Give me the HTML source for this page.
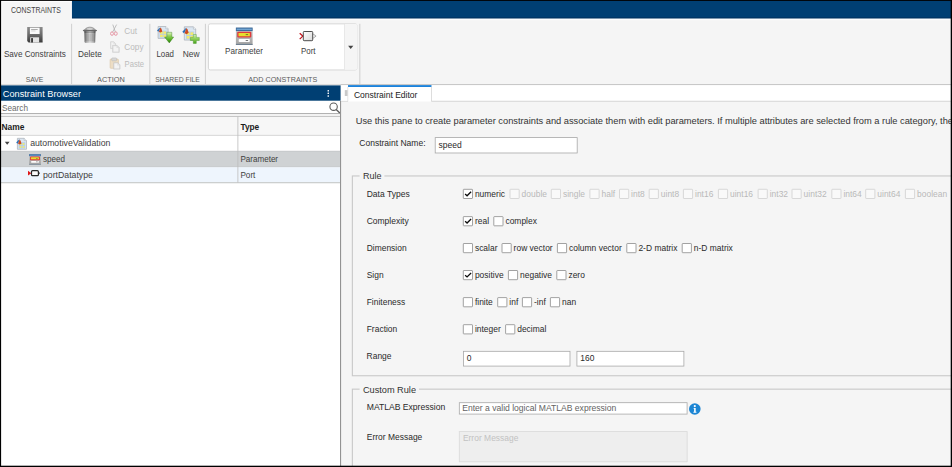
<!DOCTYPE html><html><head><meta charset="utf-8"><title>Constraint Manager</title><style>
html,body{margin:0;padding:0;width:952px;height:467px;overflow:hidden;background:#000;}
#scale{position:absolute;left:0;top:0;width:9520px;height:4670px;transform:scale(0.1);transform-origin:0 0;font-family:"Liberation Sans", Arial, sans-serif;}
#app{position:absolute;left:0px;top:0px;width:9520px;height:4670px;background:#f5f5f5;overflow:hidden;}
.frame{position:absolute;background:#000;z-index:50;}
.abs{position:absolute;}
.t{position:absolute;white-space:nowrap;transform-origin:0 0;display:block;}
.ic{position:absolute;overflow:visible;}
.sep{position:absolute;top:238px;width:9px;height:604px;background:#cbcbcb;}
.cb{position:absolute;width:100px;height:100px;box-sizing:border-box;border:8.5px solid #8c8c8c;border-radius:9px;background:#fff;}
.cb.dis{border-color:#cfcfcf;background:#f9f9f9;}
.inp{position:absolute;box-sizing:border-box;border:8px solid #a6a6a6;background:#fff;}
.fs{position:absolute;box-sizing:border-box;border:11px solid #c8c8c8;}
</style></head><body><div id="scale"><div id="app"><div id="toolstrip"><div class="tabbar" style="position:absolute;left:0px;top:0px;width:9520px;height:186px;background:#003f73;"></div><div style="position:absolute;left:0px;top:174px;width:9520px;height:12px;background:#00305f;"></div><div style="position:absolute;left:0px;top:186px;width:9520px;height:15px;background:#fdfdfd;"></div><div class="tab" style="position:absolute;left:0px;top:0px;width:717px;height:202px;background:#f5f5f5;"></div><div style="position:absolute;left:11px;top:9px;width:707px;height:12px;background:#fefefe;"></div><div style="position:absolute;left:705px;top:9px;width:13px;height:181px;background:#fdfdfd;"></div><div style="position:absolute;left:11px;top:9px;width:11px;height:833px;background:#fdfdfd;"></div><span class="t" id="t0" style="left:110px;top:52.4px;font-size:82px;line-height:98.4px;color:#444;transform:scaleX(0.8503);">CONSTRAINTS</span><div class="sep" style="left:712px;"></div><div class="sep" style="left:1494px;"></div><div class="sep" style="left:2049px;"></div><div class="sep" style="left:3594px;"></div><svg class="ic" style="left:270px;top:269px;width:158px;height:158px;" viewBox="0 0 15.8 15.8"><defs><linearGradient id="gsv" x1="0" y1="0" x2="0" y2="1"><stop offset="0" stop-color="#8c8c8c"/><stop offset="0.5" stop-color="#6a6a6a"/><stop offset="1" stop-color="#3a3a3a"/></linearGradient></defs>
<path d="M0.2 0.2H15.6V15.6H1.6L0.2 14.2Z" fill="url(#gsv)"/>
<rect x="2.9" y="0.8" width="9.7" height="6.3" fill="#fafafa"/>
<rect x="4.1" y="2.3" width="6.6" height="0.8" fill="#9a9a9a"/>
<rect x="4.1" y="3.7" width="4.4" height="0.7" fill="#c4c4c4"/>
<rect x="3.2" y="10.4" width="8.9" height="5.2" fill="#e4e4e4"/>
<rect x="4.1" y="11.2" width="1.9" height="4.4" fill="#3c3c3c"/></svg><span class="t" id="t1" style="left:39px;top:489.5px;font-size:85px;line-height:102px;color:#3e3e3e;transform:scaleX(0.9567);">Save Constraints</span><span class="t" id="t2" style="left:257px;top:748.3px;font-size:81px;line-height:97.2px;color:#5a5a5a;transform:scaleX(0.8429);">SAVE</span><svg class="ic" style="left:826px;top:268px;width:146px;height:160px;" viewBox="0 0 14.6 16"><defs><linearGradient id="gtr" x1="0" y1="0" x2="1" y2="0"><stop offset="0" stop-color="#5a5a5a"/><stop offset="0.22" stop-color="#a2a2a2"/><stop offset="0.5" stop-color="#d8d8d8"/><stop offset="0.8" stop-color="#a8a8a8"/><stop offset="1" stop-color="#5e5e5e"/></linearGradient>
<linearGradient id="gtl" x1="0" y1="0" x2="0" y2="1"><stop offset="0" stop-color="#d2d2d2"/><stop offset="1" stop-color="#8c8c8c"/></linearGradient></defs>
<path d="M0.5 3.7C2.6 2.9 3.4 0.3 7.3 0.3C11.2 0.3 12 2.9 14.1 3.7Z" fill="url(#gtl)" stroke="#6e6e6e" stroke-width="0.5"/>
<ellipse cx="7.3" cy="2.2" rx="3" ry="0.8" fill="#e6e6e6" opacity="0.85"/>
<path d="M0.1 3.95L0.9 3.4H13.7L14.5 3.95L13.5 4.5H1.1Z" fill="#585858"/>
<path d="M1.7 4.3H12.9L12.6 15.2C12.6 15.8 12.1 16 11.6 16H3C2.5 16 2 15.8 2 15.2Z" fill="url(#gtr)"/>
<rect x="1.8" y="4.3" width="11" height="1.9" fill="#000" opacity="0.22"/>
<path d="M4.4 6.8V14.6M6.3 6.8V14.6M8.3 6.8V14.6M10.2 6.8V14.6" stroke="#7c7c7c" stroke-width="0.55" opacity="0.75"/>
<rect x="2.4" y="14.7" width="9.8" height="0.9" fill="#fff" opacity="0.25"/></svg><span class="t" id="t3" style="left:780px;top:489.5px;font-size:85px;line-height:102px;color:#3e3e3e;transform:scaleX(0.9675);">Delete</span><svg class="ic" style="left:1101px;top:244px;width:76px;height:114px;" viewBox="0 0 7.6 11.4"><g opacity="0.62"><path d="M2.7 0.2L5.3 7.7M6.5 0.2L2.5 7.7" stroke="#8e8e8e" stroke-width="0.85" fill="none"/>
<ellipse cx="1.9" cy="9.2" rx="1.45" ry="1.75" fill="none" stroke="#d9506a" stroke-width="0.9"/>
<ellipse cx="5.7" cy="9.2" rx="1.45" ry="1.75" fill="none" stroke="#d9506a" stroke-width="0.9"/></g></svg><span class="t" id="t4" style="left:1243px;top:259.5px;font-size:85px;line-height:102px;color:#bcbcbc;transform:scaleX(0.9621);">Cut</span><svg class="ic" style="left:1102px;top:413px;width:92px;height:112px;" viewBox="0 0 9.4 11.4"><g opacity="0.62"><path d="M0.4 0.4H3.6L5.4 2.2V7.4H0.4Z" fill="#d9d9d9" stroke="#b2b2b2" stroke-width="0.6"/>
<path d="M1.2 1.2H3.2V2.8H4.6V6.6H1.2Z" fill="#f2f2f2"/>
<path d="M2.5 4.1H7L9.2 6.3V11.2H2.5Z" fill="#d4d4d4" stroke="#aaaaaa" stroke-width="0.6"/>
<path d="M3.4 5H6.4V6.8H8.3V10.3H3.4Z" fill="#f2f2f2"/></g></svg><span class="t" id="t5" style="left:1243px;top:419.5px;font-size:85px;line-height:102px;color:#bcbcbc;transform:scaleX(0.9697);">Copy</span><svg class="ic" style="left:1098px;top:578px;width:104px;height:115px;" viewBox="0 0 10.4 11.5"><g opacity="0.62"><rect x="0.3" y="1.3" width="8.3" height="9.2" rx="0.8" fill="#e7cfa8" stroke="#c8a672" stroke-width="0.6"/>
<rect x="1.9" y="0.1" width="4.9" height="2.9" rx="0.8" fill="#c4c4c4" stroke="#8e8e8e" stroke-width="0.5"/>
<path d="M3.8 4.9H8L10.2 7.1V11.3H3.8Z" fill="#d6d6d6" stroke="#a8a8a8" stroke-width="0.6"/>
<path d="M4.7 5.8H7.4V7.6H9.3V10.4H4.7Z" fill="#f2f2f2"/></g></svg><span class="t" id="t6" style="left:1246px;top:589.5px;font-size:85px;line-height:102px;color:#bcbcbc;transform:scaleX(0.8940);">Paste</span><span class="t" id="t7" style="left:970px;top:748.3px;font-size:81px;line-height:97.2px;color:#5a5a5a;transform:scaleX(0.9052);">ACTION</span><svg class="ic" style="left:1570px;top:262px;width:167px;height:167px;" viewBox="0 0 16.7 16.7"><defs><linearGradient id="gld" x1="0" y1="0" x2="0" y2="1"><stop offset="0" stop-color="#dff3c4"/><stop offset="0.35" stop-color="#8fd058"/><stop offset="0.7" stop-color="#56ad24"/><stop offset="1" stop-color="#2a7c10"/></linearGradient></defs><g transform="translate(0.8 0)">
<path d="M0.3 0.3H8.00L10.30 2.6V12.20H0.3Z" fill="#dbe6f1" stroke="#a3a9b0" stroke-width="0.65"/>
<path d="M8.00 0.3V2.6H10.30" fill="#f6f9fc" stroke="#a3a9b0" stroke-width="0.5"/>
<rect x="1.70" y="4.50" width="7.21" height="7.00" fill="#b9cfe8"/>
<rect x="2.33" y="5.25" width="2.54" height="2.38" fill="#f3ec6c"/><rect x="2.33" y="8.50" width="2.54" height="2.38" fill="#f3ec6c"/><rect x="5.72" y="5.25" width="2.54" height="2.38" fill="#f3ec6c"/><rect x="5.72" y="8.50" width="2.54" height="2.38" fill="#f3ec6c"/></g><g transform="translate(0 1.1) scale(1.0)">
<path d="M0 3.3L2.6 0.6L3.4 0.2L2.4 3.0L1.3 4.5Z" fill="#2a70b8"/>
<path d="M3.4 0.2L4.4 1.5L5.3 4.2L3.6 5.3L1.9 4.6L2.5 2.8Z" fill="#cc4a20"/>
</g><path d="M9.8 6.1H14.8V10.8H16.7L12.3 16.7L7.5 10.8H9.8Z" fill="url(#gld)" stroke="#2f7a16" stroke-width="0.4"/></svg><span class="t" id="t8" style="left:1564px;top:489.5px;font-size:85px;line-height:102px;color:#3e3e3e;transform:scaleX(0.9312);">Load</span><svg class="ic" style="left:1823px;top:265px;width:170px;height:170px;" viewBox="0 0 17 17"><defs><linearGradient id="gnw" x1="0" y1="0" x2="0" y2="1"><stop offset="0" stop-color="#d6efb6"/><stop offset="0.45" stop-color="#92d25c"/><stop offset="1" stop-color="#4aa51e"/></linearGradient></defs><g transform="translate(1.7 0)">
<path d="M0.3 0.3H9.40L11.70 2.6V13.60H0.3Z" fill="#dbe6f1" stroke="#a3a9b0" stroke-width="0.65"/>
<path d="M9.40 0.3V2.6H11.70" fill="#f6f9fc" stroke="#a3a9b0" stroke-width="0.5"/>
<rect x="1.92" y="5.00" width="8.16" height="7.78" fill="#b9cfe8"/>
<rect x="2.64" y="5.84" width="2.88" height="2.64" fill="#f3ec6c"/><rect x="2.64" y="9.45" width="2.88" height="2.64" fill="#f3ec6c"/><rect x="6.48" y="5.84" width="2.88" height="2.64" fill="#f3ec6c"/><rect x="6.48" y="9.45" width="2.88" height="2.64" fill="#f3ec6c"/></g><g transform="translate(0 1.3) scale(1.2)">
<path d="M0 3.3L2.6 0.6L3.4 0.2L2.4 3.0L1.3 4.5Z" fill="#2a70b8"/>
<path d="M3.4 0.2L4.4 1.5L5.3 4.2L3.6 5.3L1.9 4.6L2.5 2.8Z" fill="#cc4a20"/>
</g><path d="M11 8H14V10.9H17V14H14V16.9H11V14H8.1V10.9H11Z" fill="url(#gnw)" stroke="#3f8f20" stroke-width="0.4"/></svg><span class="t" id="t9" style="left:1828px;top:489.5px;font-size:85px;line-height:102px;color:#3e3e3e;transform:scaleX(0.9824);">New</span><span class="t" id="t10" style="left:1553px;top:748.3px;font-size:81px;line-height:97.2px;color:#5a5a5a;transform:scaleX(0.8399);">SHARED FILE</span><div style="position:absolute;left:2080px;top:234px;width:1494px;height:470px;background:#fff;box-sizing:border-box;border:9px solid #d2d2d2;border-radius:22px;"></div><div style="position:absolute;left:3442px;top:241px;width:125px;height:456px;background:#f5f5f5;border-left:7px solid #d6d6d6;border-radius:0 16px 16px 0;"></div><svg class="ic" style="left:3481px;top:458px;width:52px;height:32px;" viewBox="0 0 10 6"><path d="M0 0H10L5 6Z" fill="#444"/></svg><svg class="ic" style="left:2359px;top:276px;width:167px;height:172px;" viewBox="0 0 16.7 17.2" preserveAspectRatio="none"><defs><linearGradient id="gpbp" x1="0" y1="0" x2="0" y2="1"><stop offset="0" stop-color="#c9c9c9"/><stop offset="1" stop-color="#a4a4a4"/></linearGradient></defs>
<rect x="0" y="0" width="16.7" height="17.2" fill="url(#gpbp)"/>
<rect x="0" y="0" width="16.7" height="3.4" fill="#3d6c9e"/>
<rect x="0.8" y="1.1" width="15.1" height="1.1" fill="#7fb2dd"/>
<rect x="0" y="16.3" width="16.7" height="0.9" fill="#5d7388"/>
<rect x="1.3" y="4.1" width="14.1" height="5.9" rx="1" fill="#e03a3a"/>
<rect x="2.6" y="5.4" width="11.4" height="3.3" rx="0.6" fill="#e6dd2e"/>
<rect x="9.8" y="6.6" width="2.4" height="0.9" fill="#6d6a2a"/>
<rect x="2.8" y="11.3" width="11.1" height="3.1" rx="0.8" fill="#fdfdfd"/>
<rect x="9.8" y="12.4" width="2.4" height="0.9" fill="#6a6a6a"/></svg><span class="t" id="t11" style="left:2250px;top:455.5px;font-size:85px;line-height:102px;color:#3e3e3e;transform:scaleX(0.9572);">Parameter</span><svg class="ic" style="left:2991px;top:310px;width:173px;height:102px;" viewBox="0 0 17.3 10.2"><defs><linearGradient id="gpt" x1="0" y1="0" x2="1" y2="1"><stop offset="0" stop-color="#ffffff"/><stop offset="1" stop-color="#d9d9d9"/></linearGradient></defs>
<path d="M0.6 2.2L3.7 5.1L0.6 8.1" fill="none" stroke="#c0141c" stroke-width="1.3"/>
<path d="M13.9 2.9L17 5.1L13.9 7.3" fill="#f4f4f4" stroke="#8a8a8a" stroke-width="0.7"/>
<rect x="4.2" y="0.5" width="9.4" height="9.2" rx="0.8" fill="url(#gpt)" stroke="#454545" stroke-width="0.95"/></svg><span class="t" id="t12" style="left:3009px;top:455.5px;font-size:85px;line-height:102px;color:#3e3e3e;transform:scaleX(0.9359);">Port</span><span class="t" id="t13" style="left:2482px;top:748.3px;font-size:81px;line-height:97.2px;color:#5a5a5a;transform:scaleX(0.8915);">ADD CONSTRAINTS</span><div style="position:absolute;left:0px;top:842px;width:9520px;height:10px;background:#bdbdbd;"></div><div style="position:absolute;left:0px;top:842px;width:3406px;height:12px;background:#e2e2e2;"></div></div><div id="browser"><div style="position:absolute;left:0px;top:854px;width:3406px;height:3816px;background:#fff;"></div><div style="position:absolute;left:0px;top:854px;width:3406px;height:153px;background:#003f73;"></div><span class="t" id="t14" style="left:28px;top:882px;font-size:93px;line-height:111.6px;color:#fff;transform:scaleX(0.9886);">Constraint Browser</span><div style="position:absolute;left:3275px;top:899.5px;width:15px;height:15px;background:#fff;border-radius:5px;"></div><div style="position:absolute;left:3275px;top:925.5px;width:15px;height:15px;background:#fff;border-radius:5px;"></div><div style="position:absolute;left:3275px;top:951.5px;width:15px;height:15px;background:#fff;border-radius:5px;"></div><span class="t" id="t15" style="left:20px;top:1030.5px;font-size:84px;line-height:100.8px;color:#6b6b6b;transform:scaleX(0.9774);">Search</span><svg class="ic" style="left:3290px;top:1025px;width:120px;height:120px;" viewBox="0 0 12 12"><circle cx="4.6" cy="4.2" r="3.7" fill="none" stroke="#5c5c5c" stroke-width="1.1"/><path d="M7.2 6.9L11.6 11.2" stroke="#5c5c5c" stroke-width="1.35"/></svg><div style="position:absolute;left:0px;top:1132px;width:3406px;height:8px;background:#979797;"></div><div style="position:absolute;left:0px;top:1139px;width:3406px;height:22px;background:#f2f2f2;"></div><div style="position:absolute;left:0px;top:1160px;width:3406px;height:8px;background:#a9a9a9;"></div><div style="position:absolute;left:0px;top:1168px;width:3406px;height:182px;background:#f7f7f7;"></div><div style="position:absolute;left:0px;top:1349px;width:3406px;height:8px;background:#cdcdcd;"></div><span class="t" id="t16" style="left:15px;top:1217.4px;font-size:83px;line-height:99.6px;color:#1c1c1c;font-weight:bold;transform:scaleX(1.0133);">Name</span><span class="t" id="t17" style="left:2404px;top:1217.4px;font-size:83px;line-height:99.6px;color:#1c1c1c;font-weight:bold;transform:scaleX(1.0053);">Type</span><div style="position:absolute;left:0px;top:1511px;width:3406px;height:162px;background:#cfd2d4;"></div><div style="position:absolute;left:0px;top:1508px;width:3406px;height:8px;background:#c1c4c6;"></div><div style="position:absolute;left:0px;top:1665px;width:3406px;height:8px;background:#c5c8ca;"></div><div style="position:absolute;left:0px;top:1673px;width:3406px;height:147px;background:#eef5fd;"></div><div style="position:absolute;left:0px;top:1820px;width:3406px;height:13px;background:#cccfcf;"></div><div style="position:absolute;left:2375px;top:1164px;width:8px;height:662px;background:#bcbcbc;"></div><svg class="ic" style="left:48px;top:1418px;width:48px;height:29px;" viewBox="0 0 10 6"><path d="M0 0H10L5 6Z" fill="#444"/></svg><svg class="ic" style="left:162px;top:1380px;width:106px;height:116px;" viewBox="0 0 10.6 11.6"><g transform="translate(0.9 0)">
<path d="M0.3 0.3H7.10L9.40 2.6V11.30H0.3Z" fill="#dbe6f1" stroke="#a3a9b0" stroke-width="0.65"/>
<path d="M7.10 0.3V2.6H9.40" fill="#f6f9fc" stroke="#a3a9b0" stroke-width="0.5"/>
<rect x="1.55" y="4.18" width="6.60" height="6.50" fill="#b9cfe8"/>
<rect x="2.38" y="5.10" width="1.84" height="1.74" fill="#f3ec6c"/><rect x="2.38" y="8.12" width="1.84" height="1.74" fill="#f3ec6c"/><rect x="5.48" y="5.10" width="1.84" height="1.74" fill="#f3ec6c"/><rect x="5.48" y="8.12" width="1.84" height="1.74" fill="#f3ec6c"/></g><g transform="translate(0 1.2) scale(1.0)">
<path d="M0 3.3L2.6 0.6L3.4 0.2L2.4 3.0L1.3 4.5Z" fill="#2a70b8"/>
<path d="M3.4 0.2L4.4 1.5L5.3 4.2L3.6 5.3L1.9 4.6L2.5 2.8Z" fill="#cc4a20"/>
</g></svg><span class="t" id="t18" style="left:302px;top:1378.6px;font-size:86px;line-height:103.2px;color:#3e3e3e;transform:scaleX(1.0114);">automotiveValidation</span><svg class="ic" style="left:291px;top:1541px;width:118px;height:104px;" viewBox="0 0 16.7 17.2" preserveAspectRatio="none"><defs><linearGradient id="gpbq" x1="0" y1="0" x2="0" y2="1"><stop offset="0" stop-color="#c9c9c9"/><stop offset="1" stop-color="#a4a4a4"/></linearGradient></defs>
<rect x="0" y="0" width="16.7" height="17.2" fill="url(#gpbq)"/>
<rect x="0" y="0" width="16.7" height="3.4" fill="#3d6c9e"/>
<rect x="0.8" y="1.1" width="15.1" height="1.1" fill="#7fb2dd"/>
<rect x="0" y="16.3" width="16.7" height="0.9" fill="#5d7388"/>
<rect x="1.3" y="4.1" width="14.1" height="5.9" rx="1" fill="#e03a3a"/>
<rect x="2.6" y="5.4" width="11.4" height="3.3" rx="0.6" fill="#e6dd2e"/>
<rect x="9.8" y="6.6" width="2.4" height="0.9" fill="#6d6a2a"/>
<rect x="2.8" y="11.3" width="11.1" height="3.1" rx="0.8" fill="#fdfdfd"/>
<rect x="9.8" y="12.4" width="2.4" height="0.9" fill="#6a6a6a"/></svg><span class="t" id="t19" style="left:430px;top:1534.6px;font-size:86px;line-height:103.2px;color:#3e3e3e;transform:scaleX(0.9359);">speed</span><span class="t" id="t20" style="left:2404px;top:1534.6px;font-size:86px;line-height:103.2px;color:#3e3e3e;transform:scaleX(0.9378);">Parameter</span><svg class="ic" style="left:280px;top:1701px;width:120px;height:62px;" viewBox="0 0 12 6.2"><path d="M0 0.7L3.3 3.1L0 5.5Z" fill="#e01818"/>
<path d="M10.4 1.7L11.9 3.1L10.4 4.5" fill="none" stroke="#333" stroke-width="0.7"/>
<rect x="3.5" y="0.6" width="6.9" height="5" rx="1" fill="#fbfbfb" stroke="#262626" stroke-width="1.2"/></svg><span class="t" id="t21" style="left:430px;top:1693.6px;font-size:86px;line-height:103.2px;color:#3e3e3e;transform:scaleX(1.0122);">portDatatype</span><span class="t" id="t22" style="left:2404px;top:1693.6px;font-size:86px;line-height:103.2px;color:#3e3e3e;transform:scaleX(0.9494);">Port</span><div style="position:absolute;left:3400px;top:1007px;width:11px;height:3663px;background:#939393;"></div></div><div id="editor"><div style="position:absolute;left:3411px;top:852px;width:6109px;height:158px;background:#fff;"></div><div style="position:absolute;left:4312px;top:1008px;width:5208px;height:8px;background:#cdcdcd;"></div><div style="position:absolute;left:3411px;top:1009px;width:69px;height:7px;background:#d2d2d2;"></div><div style="position:absolute;left:3448px;top:901px;width:29px;height:59px;background:#c9c9c9;"></div><div style="position:absolute;left:3480px;top:1010px;width:832px;height:7px;background:#fdfdfd;"></div><div style="position:absolute;left:3480px;top:851px;width:835px;height:19px;background:#1c82da;"></div><div style="position:absolute;left:4311px;top:868px;width:7px;height:144px;background:#cfcfcf;"></div><div style="position:absolute;left:3475px;top:868px;width:7px;height:146px;background:#dcdcdc;"></div><span class="t" id="t23" style="left:3539px;top:896.5px;font-size:85px;line-height:102px;color:#222;transform:scaleX(1.0032);">Constraint Editor</span><span class="t" id="t24" style="left:3557px;top:1152.5px;font-size:92.4px;line-height:110.9px;color:#333;transform:scaleX(1.0029);">Use this pane to create parameter constraints and associate them with edit parameters. If multiple attributes are selected from a rule category, the</span><span class="t" id="t25" style="left:3593px;top:1381.8px;font-size:84.7px;line-height:101.6px;color:#2a2a2a;transform:scaleX(1.0046);">Constraint Name:</span><div class="inp" style="left:4348px;top:1372px;width:1428px;height:162px;"></div><span class="t" id="t26" style="left:4385px;top:1398.8px;font-size:84.7px;line-height:101.6px;color:#2a2a2a;transform:scaleX(1.0043);">speed</span><div class="fs" style="left:3518px;top:1754px;width:6400px;height:2009px;"></div><div style="position:absolute;left:3596px;top:1730px;width:248px;height:50px;background:#f5f5f5;"></div><span class="t" id="t27" style="left:3629px;top:1699.5px;font-size:92.4px;line-height:110.9px;color:#333;transform:scaleX(0.9737);">Rule</span><span class="t" id="t28" style="left:3667px;top:1887.8px;font-size:84.7px;line-height:101.6px;color:#2a2a2a;transform:scaleX(1.0070);">Data Types</span><span class="t" id="t29" style="left:3667px;top:2160.8px;font-size:84.7px;line-height:101.6px;color:#2a2a2a;transform:scaleX(1.0024);">Complexity</span><span class="t" id="t30" style="left:3667px;top:2429.8px;font-size:84.7px;line-height:101.6px;color:#2a2a2a;transform:scaleX(0.9975);">Dimension</span><span class="t" id="t31" style="left:3667px;top:2699.8px;font-size:84.7px;line-height:101.6px;color:#2a2a2a;">Sign</span><span class="t" id="t32" style="left:3667px;top:2970.8px;font-size:84.7px;line-height:101.6px;color:#2a2a2a;">Finiteness</span><span class="t" id="t33" style="left:3667px;top:3241.8px;font-size:84.7px;line-height:101.6px;color:#2a2a2a;">Fraction</span><span class="cb" style="left:4629px;top:1889px;"><svg viewBox="0 0 10 10" style="position:absolute;left:0;top:0;width:100%;height:100%"><path d="M1.7 5.1L4.0 7.2L8.8 2.4" fill="none" stroke="#0c0c0c" stroke-width="1.55"/></svg></span><span class="t" id="t34" style="left:4749px;top:1887.8px;font-size:84.7px;line-height:101.6px;color:#2a2a2a;">numeric</span><span class="cb dis" style="left:5096px;top:1889px;"></span><span class="t" id="t35" style="left:5216px;top:1887.8px;font-size:84.7px;line-height:101.6px;color:#b9b9b9;">double</span><span class="cb dis" style="left:5509px;top:1889px;"></span><span class="t" id="t36" style="left:5629px;top:1887.8px;font-size:84.7px;line-height:101.6px;color:#b9b9b9;">single</span><span class="cb dis" style="left:5895px;top:1889px;"></span><span class="t" id="t37" style="left:6015px;top:1887.8px;font-size:84.7px;line-height:101.6px;color:#b9b9b9;">half</span><span class="cb dis" style="left:6191px;top:1889px;"></span><span class="t" id="t38" style="left:6311px;top:1887.8px;font-size:84.7px;line-height:101.6px;color:#b9b9b9;">int8</span><span class="cb dis" style="left:6488px;top:1889px;"></span><span class="t" id="t39" style="left:6608px;top:1887.8px;font-size:84.7px;line-height:101.6px;color:#b9b9b9;">uint8</span><span class="cb dis" style="left:6830px;top:1889px;"></span><span class="t" id="t40" style="left:6950px;top:1887.8px;font-size:84.7px;line-height:101.6px;color:#b9b9b9;">int16</span><span class="cb dis" style="left:7180px;top:1889px;"></span><span class="t" id="t41" style="left:7300px;top:1887.8px;font-size:84.7px;line-height:101.6px;color:#b9b9b9;">uint16</span><span class="cb dis" style="left:7577px;top:1889px;"></span><span class="t" id="t42" style="left:7697px;top:1887.8px;font-size:84.7px;line-height:101.6px;color:#b9b9b9;">int32</span><span class="cb dis" style="left:7916px;top:1889px;"></span><span class="t" id="t43" style="left:8036px;top:1887.8px;font-size:84.7px;line-height:101.6px;color:#b9b9b9;">uint32</span><span class="cb dis" style="left:8314px;top:1889px;"></span><span class="t" id="t44" style="left:8434px;top:1887.8px;font-size:84.7px;line-height:101.6px;color:#b9b9b9;">int64</span><span class="cb dis" style="left:8653px;top:1889px;"></span><span class="t" id="t45" style="left:8773px;top:1887.8px;font-size:84.7px;line-height:101.6px;color:#b9b9b9;">uint64</span><span class="cb dis" style="left:9050px;top:1889px;"></span><span class="t" id="t46" style="left:9170px;top:1887.8px;font-size:84.7px;line-height:101.6px;color:#b9b9b9;">boolean</span><span class="cb" style="left:4629px;top:2162px;"><svg viewBox="0 0 10 10" style="position:absolute;left:0;top:0;width:100%;height:100%"><path d="M1.7 5.1L4.0 7.2L8.8 2.4" fill="none" stroke="#0c0c0c" stroke-width="1.55"/></svg></span><span class="t" id="t47" style="left:4749px;top:2160.8px;font-size:84.7px;line-height:101.6px;color:#2a2a2a;">real</span><span class="cb" style="left:4934px;top:2162px;"></span><span class="t" id="t48" style="left:5054px;top:2160.8px;font-size:84.7px;line-height:101.6px;color:#2a2a2a;">complex</span><span class="cb" style="left:4629px;top:2431px;"></span><span class="t" id="t49" style="left:4749px;top:2429.8px;font-size:84.7px;line-height:101.6px;color:#2a2a2a;">scalar</span><span class="cb" style="left:5016px;top:2431px;"></span><span class="t" id="t50" style="left:5136px;top:2429.8px;font-size:84.7px;line-height:101.6px;color:#2a2a2a;">row vector</span><span class="cb" style="left:5570px;top:2431px;"></span><span class="t" id="t51" style="left:5690px;top:2429.8px;font-size:84.7px;line-height:101.6px;color:#2a2a2a;">column vector</span><span class="cb" style="left:6264px;top:2431px;"></span><span class="t" id="t52" style="left:6384px;top:2429.8px;font-size:84.7px;line-height:101.6px;color:#2a2a2a;">2-D matrix</span><span class="cb" style="left:6818px;top:2431px;"></span><span class="t" id="t53" style="left:6938px;top:2429.8px;font-size:84.7px;line-height:101.6px;color:#2a2a2a;">n-D matrix</span><span class="cb" style="left:4629px;top:2701px;"><svg viewBox="0 0 10 10" style="position:absolute;left:0;top:0;width:100%;height:100%"><path d="M1.7 5.1L4.0 7.2L8.8 2.4" fill="none" stroke="#0c0c0c" stroke-width="1.55"/></svg></span><span class="t" id="t54" style="left:4749px;top:2699.8px;font-size:84.7px;line-height:101.6px;color:#2a2a2a;">positive</span><span class="cb" style="left:5080px;top:2701px;"></span><span class="t" id="t55" style="left:5200px;top:2699.8px;font-size:84.7px;line-height:101.6px;color:#2a2a2a;">negative</span><span class="cb" style="left:5564px;top:2701px;"></span><span class="t" id="t56" style="left:5684px;top:2699.8px;font-size:84.7px;line-height:101.6px;color:#2a2a2a;">zero</span><span class="cb" style="left:4629px;top:2972px;"></span><span class="t" id="t57" style="left:4749px;top:2970.8px;font-size:84.7px;line-height:101.6px;color:#2a2a2a;">finite</span><span class="cb" style="left:4973px;top:2972px;"></span><span class="t" id="t58" style="left:5093px;top:2970.8px;font-size:84.7px;line-height:101.6px;color:#2a2a2a;">inf</span><span class="cb" style="left:5220px;top:2972px;"></span><span class="t" id="t59" style="left:5340px;top:2970.8px;font-size:84.7px;line-height:101.6px;color:#2a2a2a;">-inf</span><span class="cb" style="left:5500px;top:2972px;"></span><span class="t" id="t60" style="left:5620px;top:2970.8px;font-size:84.7px;line-height:101.6px;color:#2a2a2a;">nan</span><span class="cb" style="left:4629px;top:3243px;"></span><span class="t" id="t61" style="left:4749px;top:3241.8px;font-size:84.7px;line-height:101.6px;color:#2a2a2a;">integer</span><span class="cb" style="left:5052px;top:3243px;"></span><span class="t" id="t62" style="left:5172px;top:3241.8px;font-size:84.7px;line-height:101.6px;color:#2a2a2a;">decimal</span><span class="t" id="t63" style="left:3666px;top:3509.8px;font-size:84.7px;line-height:101.6px;color:#2a2a2a;transform:scaleX(0.9960);">Range</span><div class="inp" style="left:4630px;top:3509px;width:1074px;height:156px;"></div><div class="inp" style="left:5765px;top:3509px;width:1078px;height:156px;"></div><span class="t" id="t64" style="left:4668px;top:3529.8px;font-size:84.7px;line-height:101.6px;color:#2a2a2a;">0</span><span class="t" id="t65" style="left:5803px;top:3529.8px;font-size:84.7px;line-height:101.6px;color:#2a2a2a;">160</span><div class="fs" style="left:3518px;top:3886px;width:6400px;height:1200px;"></div><div style="position:absolute;left:3596px;top:3860px;width:594px;height:55px;background:#f5f5f5;"></div><span class="t" id="t66" style="left:3629px;top:3838.5px;font-size:92.4px;line-height:110.9px;color:#333;transform:scaleX(0.9944);">Custom Rule</span><span class="t" id="t67" style="left:3668px;top:4022.8px;font-size:84.7px;line-height:101.6px;color:#2a2a2a;transform:scaleX(1.0116);">MATLAB Expression</span><div class="inp" style="left:4589px;top:4023px;width:2286px;height:122px;"></div><span class="t" id="t68" style="left:4622px;top:4028.8px;font-size:84.7px;line-height:101.6px;color:#636363;transform:scaleX(1.0112);">Enter a valid logical MATLAB expression</span><svg class="ic" style="left:6890px;top:4032px;width:116px;height:116px;" viewBox="0 0 11.6 11.6"><circle cx="5.8" cy="5.8" r="5.8" fill="#1d86d4"/><circle cx="5.8" cy="2.9" r="1.1" fill="#fff"/><path d="M4.6 4.7H6.7V8.6H7.4V9.5H4.4V8.6H5.1V5.6H4.6Z" fill="#fff"/></svg><span class="t" id="t69" style="left:3668px;top:4315.8px;font-size:84.7px;line-height:101.6px;color:#2a2a2a;transform:scaleX(1.0000);">Error Message</span><div class="inp" style="left:4589px;top:4312px;width:2286px;height:310px;background:#eeeeee;border-color:#dadada;"></div><span class="t" id="t70" style="left:4629px;top:4329.8px;font-size:84.7px;line-height:101.6px;color:#c2c2c2;">Error Message</span></div><div class="frame" style="position:absolute;left:0px;top:0px;width:9520px;height:9px;background:#000;"></div><div class="frame" style="position:absolute;left:0px;top:0px;width:11px;height:4670px;background:#000;"></div><div class="frame" style="position:absolute;left:9507px;top:0px;width:13px;height:4670px;background:#000;"></div><div class="frame" style="position:absolute;left:0px;top:4657px;width:9520px;height:13px;background:#000;"></div></div></div></body></html>
